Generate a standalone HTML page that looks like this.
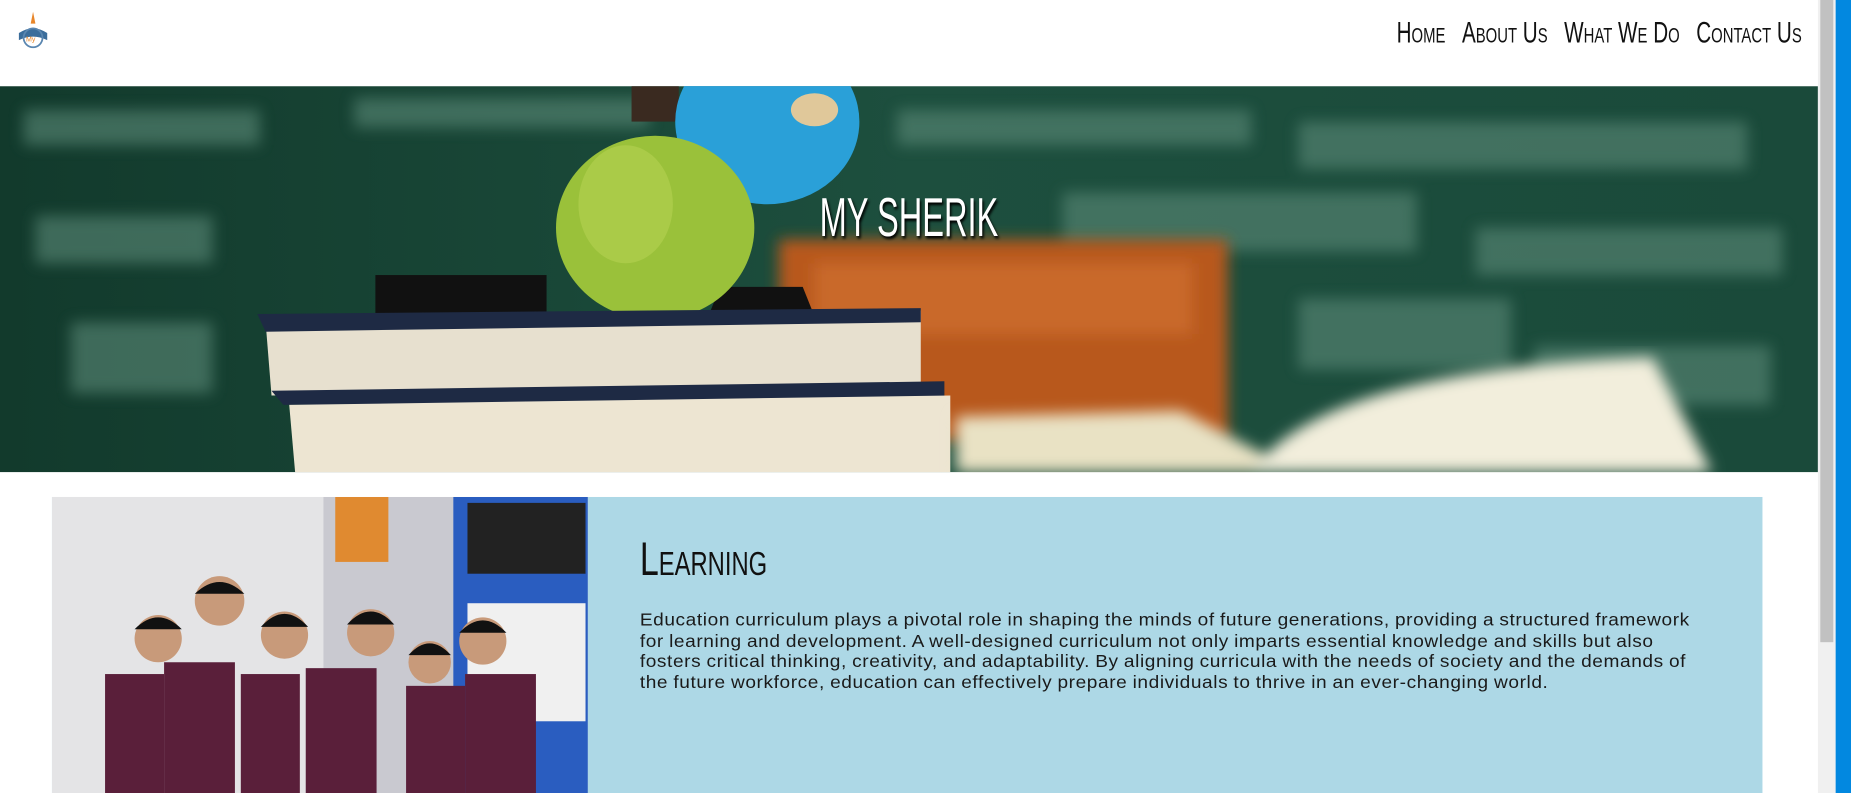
<!DOCTYPE html>
<html><head><meta charset="utf-8"><style>
html,body{margin:0;padding:0;overflow:hidden;background:#fff}
#w{width:1568px;height:672px;position:relative;transform:scale(1.18048);transform-origin:0 0;font-family:"Liberation Sans",sans-serif}
.nav{position:absolute;top:14px;right:42px;display:flex;gap:20px;font-family:"Liberation Sans Narrow","Liberation Sans",sans-serif;font-size:25px;color:#111;transform:scaleX(.7);transform-origin:right}
.nav span{font-variant:small-caps;letter-spacing:0}
.title{position:absolute;left:0;width:1540px;top:157px;text-align:center;color:#fff;font-family:"Liberation Sans Narrow",sans-serif;font-size:46px;text-shadow:2px 2px 3px #000;transform:scaleX(.6)}
</style></head><body><div id="w">
<svg style="position:absolute;left:12px;top:8px" width="32" height="34" viewBox="0 0 32 34"><path d="M16 2 L18 12 L14 12Z" fill="#e8862a"/><path d="M4 20 Q16 12 28 20 L28 26 Q16 20 4 26Z" fill="#3b6d9b"/><circle cx="16" cy="24" r="8" fill="none" stroke="#5a86b0" stroke-width="1.5"/><text x="10" y="27" font-size="6" fill="#e8862a">My</text></svg>
<div class="nav"><span>Home</span><span>About Us</span><span>What We Do</span><span>Contact Us</span></div>
<svg style="position:absolute;left:0;top:73px" width="1540" height="327" viewBox="0 0 1540 327">
<defs><filter id="b"><feGaussianBlur stdDeviation="6"/></filter><linearGradient id="g" x1="0" x2="1"><stop offset="0" stop-color="#123a2c"/><stop offset=".5" stop-color="#1d4f3e"/><stop offset="1" stop-color="#1a4a3a"/></linearGradient></defs>
<rect width="1540" height="327" fill="url(#g)"/>
<g filter="url(#b)" fill="#5b8a78" opacity=".6">
<rect x="20" y="20" width="200" height="30"/><rect x="300" y="10" width="250" height="25"/><rect x="760" y="20" width="300" height="30"/><rect x="1100" y="30" width="380" height="40"/><rect x="30" y="110" width="150" height="40"/><rect x="900" y="90" width="300" height="50"/><rect x="1250" y="120" width="260" height="40"/><rect x="60" y="200" width="120" height="60"/><rect x="1100" y="180" width="180" height="60"/><rect x="1300" y="220" width="200" height="50"/></g>
<g filter="url(#b)"><rect x="660" y="130" width="380" height="170" fill="#b8581c"/><rect x="690" y="150" width="320" height="60" fill="#c9692a"/></g>
<rect x="535" y="0" width="40" height="30" fill="#3a2a20"/>
<ellipse cx="650" cy="30" rx="78" ry="70" fill="#2aa0d8"/><ellipse cx="690" cy="20" rx="20" ry="14" fill="#e0c89a"/>
<path d="M610 170 L680 170 L690 195 L600 195Z" fill="#111"/>
<rect x="318" y="160" width="145" height="35" fill="#111"/>
<ellipse cx="555" cy="120" rx="84" ry="78" fill="#9ac13a"/><ellipse cx="530" cy="100" rx="40" ry="50" fill="#b6d252" opacity=".6"/>
<path d="M225 200 L780 190 L780 255 L230 262Z" fill="#e7e0cf"/><path d="M218 193 L780 188 L780 200 L225 208Z" fill="#1e2a44"/>
<path d="M230 258 L800 250 L800 265 L240 270Z" fill="#1e2a44"/>
<path d="M245 270 L805 262 L805 327 L250 327Z" fill="#ede5d2"/>
<g filter="url(#b)"><path d="M810 280 L1000 275 L1100 327 L810 327Z" fill="#e9e2c4"/><path d="M1060 327 Q1120 240 1400 230 L1450 327Z" fill="#f2eedc"/></g>
</svg>
<div class="title">MY SHERIK</div>
<div style="position:absolute;left:44px;top:421px;width:1449px;height:260px;background:#add8e6"></div>
<svg style="position:absolute;left:44px;top:421px" width="454" height="251" viewBox="0 0 454 251">
<rect width="454" height="251" fill="#e4e4e6"/><rect x="230" y="0" width="110" height="251" fill="#c9c9d0"/><rect x="340" y="0" width="114" height="251" fill="#2a5dc0"/><rect x="352" y="5" width="100" height="60" fill="#222"/><rect x="352" y="90" width="100" height="100" fill="#f0f0f0"/><rect x="240" y="0" width="45" height="55" fill="#e08a30"/>
<g fill="#5a1f3a"><rect x="45" y="150" width="50" height="101"/><rect x="95" y="140" width="60" height="111"/><rect x="160" y="150" width="50" height="101"/><rect x="215" y="145" width="60" height="106"/><rect x="300" y="160" width="50" height="91"/><rect x="350" y="150" width="60" height="101"/></g>
<g fill="#c89a7a"><circle cx="90" cy="120" r="20"/><circle cx="142" cy="88" r="21"/><circle cx="197" cy="117" r="20"/><circle cx="270" cy="115" r="20"/><circle cx="320" cy="140" r="18"/><circle cx="365" cy="122" r="20"/></g>
<g fill="#111"><path d="M70 112 Q90 92 110 112Z"/><path d="M121 82 Q142 62 163 82Z"/><path d="M177 110 Q197 88 217 110Z"/><path d="M250 108 Q270 86 290 108Z"/><path d="M302 134 Q320 114 338 134Z"/><path d="M345 115 Q365 94 385 115Z"/></g>
</svg>
<div style="position:absolute;left:542px;top:452px;font-family:'Liberation Sans Narrow',sans-serif;font-size:40px;color:#111;font-variant:small-caps;transform:scaleX(.72);transform-origin:left">Learning</div>
<div style="position:absolute;left:542px;top:518px;white-space:nowrap;font-size:14.6px;line-height:17.5px;color:#1a1a1a;letter-spacing:.45px;word-spacing:-.5px;transform:scaleX(1.108);transform-origin:left">Education curriculum plays a pivotal role in shaping the minds of future generations, providing a structured framework<br>for learning and development. A well-designed curriculum not only imparts essential knowledge and skills but also<br>fosters critical thinking, creativity, and adaptability. By aligning curricula with the needs of society and the demands of<br>the future workforce, education can effectively prepare individuals to thrive in an ever-changing world.</div>
<div style="position:absolute;left:1540px;top:0;width:15px;height:672px;background:#f0f0f0"></div>
<div style="position:absolute;left:1542px;top:0;width:11px;height:544px;background:#c1c1c1"></div>
<div style="position:absolute;left:1555px;top:0;width:13px;height:672px;background:#0288e0"></div>
</div></body></html>
